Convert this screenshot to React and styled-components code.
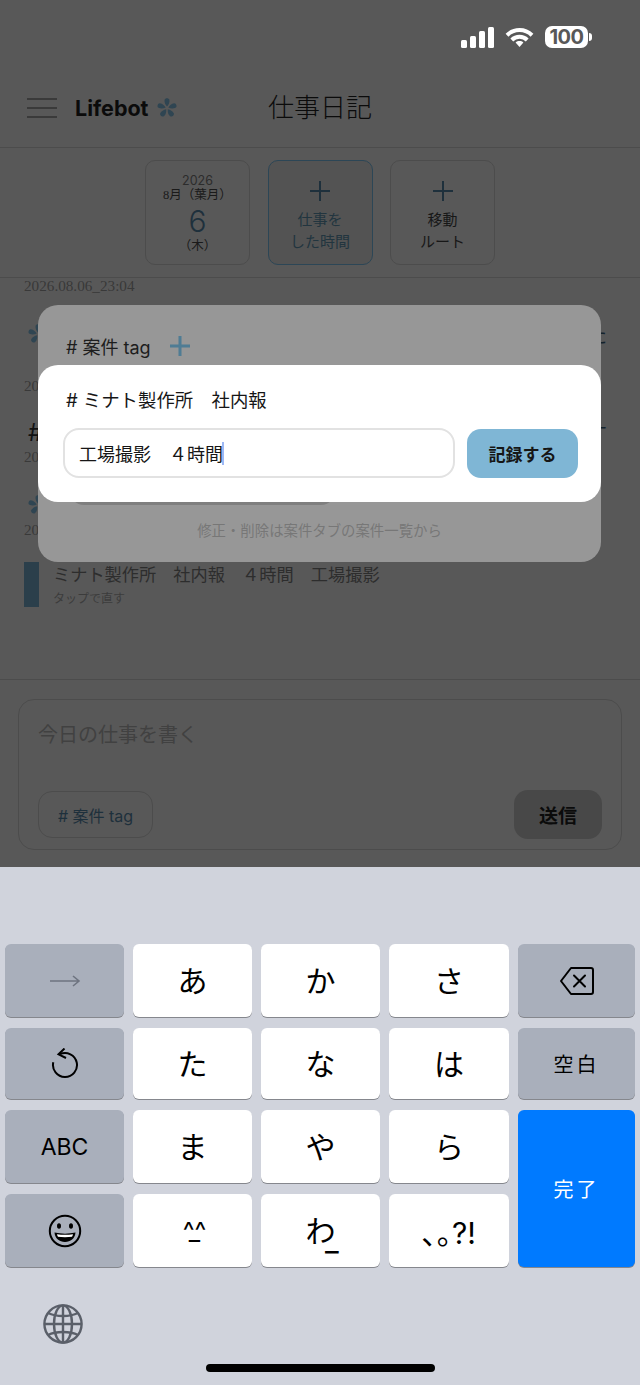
import React from 'react';
import styled, { createGlobalStyle } from 'styled-components';

const GlobalStyle = createGlobalStyle`
  html, body { margin: 0; padding: 0; background: #d0d3dc; }
  * { box-sizing: border-box; }
  body { font-family: "Inter", "Noto Sans CJK JP", sans-serif; }
`;

const SERIF = '"Liberation Serif", "Noto Sans CJK JP", serif';
const TEAL = '#1e303c';

const Screen = styled.div`
  width: 640px;
  height: 1385px;
  display: flex;
  flex-direction: column;
  overflow: hidden;
`;

const Page = styled.div`
  position: relative;
  height: 867px;
  flex: none;
  display: flex;
  flex-direction: column;
  background: #585858;
`;

const StatusBar = styled.div`
  height: 60px;
  flex: none;
  display: flex;
  justify-content: flex-end;
  align-items: flex-start;
  gap: 11px;
  padding: 26px 52px 0 0;
`;

const Battery = styled.div`
  position: relative;
  width: 43px;
  height: 22px;
  border-radius: 7px;
  background: #fff;
  color: #585858;
  font-size: 20px;
  font-weight: 700;
  line-height: 22px;
  text-align: center;
  letter-spacing: -0.5px;

  &::after {
    content: '';
    position: absolute;
    right: -4px;
    top: 7px;
    width: 3px;
    height: 8px;
    border-radius: 0 3px 3px 0;
    background: #fff;
  }
`;

const Header = styled.header`
  position: relative;
  height: 88px;
  flex: none;
  display: flex;
  align-items: center;
  padding: 8px 0 0 27px;
  border-bottom: 1px solid #4c4c4c;
`;

const MenuButton = styled.div`
  width: 30px;
  height: 20px;
  border-top: 2px solid #3a3a3a;
  border-bottom: 2px solid #3a3a3a;
  display: flex;
  align-items: center;

  &::before {
    content: '';
    width: 100%;
    height: 2px;
    background: #3a3a3a;
  }
`;

const Logo = styled.div`
  margin-left: 18px;
  display: flex;
  align-items: center;
  gap: 6px;
  font-size: 21.5px;
  font-weight: 700;
  color: #0b0b0b;
`;

const Title = styled.h1`
  position: absolute;
  left: 0;
  right: 0;
  top: 32px;
  margin: 0;
  text-align: center;
  font-family: ${SERIF};
  font-size: 26px;
  line-height: 34px;
  font-weight: 300;
  color: #0b0b0b;
`;

const TileRow = styled.div`
  height: 130px;
  flex: none;
  display: flex;
  justify-content: center;
  gap: 17.5px;
  padding-top: 12px;
  border-bottom: 1px solid #4c4c4c;
`;

const Tile = styled.div`
  width: 105px;
  height: 105px;
  display: flex;
  flex-direction: column;
  align-items: center;
  border-radius: 10px;
  border: 1px solid ${({ $active }) => ($active ? '#2c4656' : '#4c4c4c')};
  background: ${({ $active }) => ($active ? '#535353' : 'transparent')};
  color: ${({ $active }) => ($active ? '#22353f' : '#171717')};
  font-family: ${SERIF};
`;

const TileYear = styled.div`
  margin-top: 13px;
  font-size: 12.5px;
  line-height: 14px;
  color: #2c2c2c;
  font-family: "Inter", sans-serif;
`;

const TileMonth = styled.div`
  font-size: 12.5px;
  line-height: 15px;
  color: #1a1a1a;
`;

const TileDay = styled.div`
  font-family: "Inter", sans-serif;
  font-weight: 300;
  font-size: 30px;
  line-height: 35px;
  margin-top: 1px;
  color: ${TEAL};
`;

const TileWeek = styled.div`
  font-size: 12.5px;
  line-height: 15px;
  color: #1a1a1a;
`;

const TilePlus = styled.div`
  height: 22px;
  margin: 19px 0 8px;
  flex: none;
`;

const TileLabel = styled.div`
  font-size: 15px;
  line-height: 21.5px;
  text-align: center;
`;

const Feed = styled.div`
  height: 402px;
  flex: none;
  padding: 0 24px;
  border-bottom: 1px solid #4c4c4c;
`;

const Stamp = styled.div`
  font-family: ${SERIF};
  font-size: 15.2px;
  line-height: 16px;
  font-variant-numeric: oldstyle-nums;
  color: #393939;
`;

const Message = styled.div`
  height: ${({ $height }) => $height}px;
  display: flex;
  align-items: center;
  justify-content: space-between;
  padding: ${({ $pad }) => $pad || '0'};
  font-size: 20px;
  color: #14222b;
`;

const HashMark = styled.span`
  font-size: 24px;
  color: #111;
`;

const Record = styled.div`
  display: flex;
  gap: 14px;
  height: 45px;
  margin-top: 24px;
`;

const RecordBar = styled.div`
  width: 15px;
  flex: none;
  background: #2b3f4b;
`;

const RecordText = styled.div`
  font-size: 17.2px;
  line-height: 26px;
  color: #2d2d2d;
  white-space: pre;
`;

const RecordHint = styled.div`
  font-size: 12px;
  line-height: 22px;
  color: #3c3c3c;
`;

const ComposerArea = styled.div`
  flex: 1;
  padding: 19px 18px 0;
`;

const Composer = styled.div`
  height: 151px;
  width: 604px;
  display: flex;
  flex-direction: column;
  justify-content: space-between;
  padding: 21px 19px 10px 19px;
  border: 1px solid #4c4c4c;
  border-radius: 16px;
`;

const Placeholder = styled.div`
  font-size: 20px;
  line-height: 28px;
  color: #414141;
`;

const ComposerFoot = styled.div`
  display: flex;
  align-items: center;
  justify-content: space-between;
`;

const TagChip = styled.div`
  width: 115px;
  height: 47px;
  display: flex;
  align-items: center;
  justify-content: center;
  border: 1px solid #4c4c4c;
  border-radius: 14px;
  font-size: 16px;
  color: ${TEAL};
  white-space: pre;
`;

const SendButton = styled.div`
  width: 88px;
  height: 49px;
  display: flex;
  align-items: center;
  justify-content: center;
  border-radius: 14px;
  background: #484848;
  font-size: 19px;
  font-weight: 600;
  color: #0b0b0b;
`;

const Sheet = styled.div`
  position: absolute;
  left: 38px;
  top: 305px;
  width: 563px;
  height: 257px;
  display: flex;
  flex-direction: column;
  padding: 28px 0 0 28px;
  border-radius: 20px;
  background: #979797;
`;

const SheetHead = styled.div`
  height: 26px;
  display: flex;
  align-items: center;
  gap: 18px;
  font-size: 18px;
  color: #1d1d1d;
  white-space: pre;
`;

const SheetChip = styled.div`
  width: 265px;
  height: 50px;
  margin: 96px 0 0 4px;
  border-radius: 14px;
  background: #7f7f7f;
`;

const SheetHint = styled.div`
  margin: 16px 0 0 -28px;
  font-family: ${SERIF};
  font-size: 14.4px;
  line-height: 20px;
  text-align: center;
  color: #777;
`;

const Card = styled.div`
  position: absolute;
  left: 0;
  right: 0;
  top: 60px;
  height: 137px;
  padding: 22px 23px 0 25px;
  border-radius: 20px;
  background: #fff;
`;

const CardTitle = styled.div`
  height: 26px;
  margin: 0 0 15px 3px;
  font-size: 18.4px;
  line-height: 26px;
  color: #161616;
  white-space: pre;
`;

const CardForm = styled.div`
  display: flex;
  align-items: center;
  gap: 12px;
`;

const Field = styled.div`
  width: 392px;
  height: 50px;
  display: flex;
  align-items: center;
  padding-left: 14px;
  border: 2px solid #e2e2e2;
  border-radius: 16px;
  font-size: 18px;
  color: #161616;
  white-space: pre;
`;

const Caret = styled.span`
  width: 2px;
  height: 23px;
  margin-left: -1px;
  background: #9db8f5;
`;

const SaveButton = styled.div`
  width: 111px;
  height: 49px;
  display: flex;
  align-items: center;
  justify-content: center;
  border-radius: 14px;
  background: #7fb6d5;
  font-size: 17px;
  font-weight: 600;
  color: #161616;
`;

const Keyboard = styled.div`
  flex: 1;
  display: flex;
  flex-direction: column;
  background: #d0d3dc;
`;

const KeyGrid = styled.div`
  display: grid;
  grid-template-columns: 119px 119px 119px 120px 117px;
  grid-template-rows: 74px 72px 74px 74px;
  gap: 10px 9px;
  padding: 77px 0 0 5px;
`;

const KEY_BG = { char: '#fff', fn: '#a9afbb', done: '#007aff' };

const Key = styled.div`
  position: relative;
  display: flex;
  align-items: center;
  justify-content: center;
  margin-bottom: 1px;
  padding-bottom: ${({ $size, $kind }) => (!$size && !$kind ? 4 : 0)}px;
  border-radius: 6px;
  background: ${({ $kind }) => KEY_BG[$kind || 'char']};
  box-shadow: 0 1px 0 #85878d;
  color: ${({ $kind }) => ($kind === 'done' ? '#fff' : '#000')};
  font-size: ${({ $size }) => $size || 30}px;
  letter-spacing: ${({ $spacing }) => $spacing || 0}px;
  ${({ $kind }) => $kind === 'done' && 'grid-row: span 2;'}
`;

const WaUnderline = styled.span`
  position: absolute;
  left: 64px;
  top: 31px;
  font-size: 30px;
  line-height: 1;
`;

const KeyboardFoot = styled.div`
  flex: 1;
  display: flex;
  flex-direction: column;
  padding-top: 36px;
`;

const GlobeSlot = styled.div`
  height: 40px;
  padding-left: 43px;
`;

const HomeBar = styled.div`
  width: 229px;
  height: 8px;
  margin: 20px 0 0 206px;
  border-radius: 4px;
  background: #000;
`;

const Flower = ({ size = 24, color = '#2f4552' }) => (
  <svg width={size} height={size} viewBox="0 0 24 24">
    {[0, 72, 144, 216, 288].map((angle) => (
      <path
        key={angle}
        d="M12 10.6C10.2 8.6 9.2 6.4 9.6 3.8C10 1.6 14 1.6 14.4 3.8C14.8 6.4 13.8 8.6 12 10.6Z"
        fill={color}
        transform={`rotate(${angle} 12 12)`}
      />
    ))}
  </svg>
);

const SignalIcon = () => (
  <svg width="33" height="22" viewBox="0 0 33 22" fill="#fff">
    <rect x="0" y="14" width="6" height="8" rx="1.5" />
    <rect x="9" y="10" width="6" height="12" rx="1.5" />
    <rect x="18" y="5" width="6" height="17" rx="1.5" />
    <rect x="27" y="1" width="6" height="21" rx="1.5" />
  </svg>
);

const WifiIcon = () => (
  <svg width="29" height="22" viewBox="0 0 29 22" fill="none" stroke="#fff" strokeWidth="4">
    <path d="M2 9.2C9 2.4 20 2.4 27 9.2" />
    <path d="M6.8 14C11 9.8 18 9.8 22.2 14" />
    <path d="M10.6 16.4C12.8 14.6 16.2 14.6 18.4 16.4L14.5 21Z" fill="#fff" stroke="none" />
  </svg>
);

const PlusIcon = ({ color, weight = 2 }) => (
  <svg width="22" height="22" viewBox="0 0 22 22" stroke={color} strokeWidth={weight}>
    <path d="M11 1V21M1 11H21" />
  </svg>
);

const ArrowIcon = () => (
  <svg width="32" height="12" viewBox="0 0 32 12" fill="none" stroke="#6e7480" strokeWidth="1.6">
    <path d="M1 6H30M24 1L30 6L24 11" />
  </svg>
);

const UndoIcon = () => (
  <svg width="28" height="31" viewBox="0 0 28 31" fill="none" stroke="#000" strokeWidth="2">
    <path d="M9 6.1A12 12 0 1 1 2.3 14.3" />
    <path d="M13.5 0.5L7.5 6.3L15 10" />
  </svg>
);

const EmojiIcon = () => (
  <svg width="34" height="34" viewBox="0 0 34 34">
    <circle cx="17" cy="17" r="15.2" fill="none" stroke="#000" strokeWidth="2" />
    <ellipse cx="11" cy="12" rx="2" ry="2.8" />
    <ellipse cx="23" cy="12" rx="2" ry="2.8" />
    <path d="M6.5 18.5C13 20 21 20 27.5 18.5C27 24.5 22.5 28 17 28C11.5 28 7 24.5 6.5 18.5Z" />
    <path d="M9 20.2C14 21 20 21 25 20.2C24.8 21.4 24.4 22.2 24 22.8C20 23.4 14 23.4 10 22.8C9.6 22.2 9.2 21.4 9 20.2Z" fill="#fff" />
  </svg>
);

const BackspaceIcon = () => (
  <svg width="36" height="30" viewBox="0 0 36 30" fill="none" stroke="#000" strokeWidth="2" strokeLinejoin="round">
    <path d="M12 2H32C33.4 2 34 2.8 34 4V26C34 27.2 33.4 28 32 28H12L2 15Z" />
    <path d="M15 9.5L26 20.5M26 9.5L15 20.5" strokeLinecap="round" />
  </svg>
);

const GlobeIcon = () => (
  <svg width="40" height="40" viewBox="0 0 40 40" fill="none" stroke="#5a5f69" strokeWidth="2.4">
    <circle cx="20" cy="20" r="18.6" />
    <ellipse cx="20" cy="20" rx="9" ry="18.6" />
    <path d="M20 1.4V38.6M1.4 20H38.6" />
    <path d="M5 9C13 13 27 13 35 9M5 31C13 27 27 27 35 31" />
  </svg>
);

const App = () => (
  <Screen>
    <GlobalStyle />
    <Page>
      <StatusBar>
        <SignalIcon />
        <WifiIcon />
        <Battery>100</Battery>
      </StatusBar>

      <Header>
        <MenuButton />
        <Logo>
          Lifebot
          <Flower />
        </Logo>
        <Title>仕事日記</Title>
      </Header>

      <TileRow>
        <Tile>
          <TileYear>2026</TileYear>
          <TileMonth>8月（葉月）</TileMonth>
          <TileDay>6</TileDay>
          <TileWeek>（木）</TileWeek>
        </Tile>
        <Tile $active>
          <TilePlus><PlusIcon color={TEAL} /></TilePlus>
          <TileLabel>仕事を<br />した時間</TileLabel>
        </Tile>
        <Tile>
          <TilePlus><PlusIcon color={TEAL} /></TilePlus>
          <TileLabel>移動<br />ルート</TileLabel>
        </Tile>
      </TileRow>

      <Feed>
        <Stamp>2026.08.06_23:04</Stamp>
        <Message $height={84} $pad="0 9px 4px 2px">
          <Flower />
          <span>今日もお疲れさまでした</span>
        </Message>
        <Stamp>2026.08.06_23:04</Stamp>
        <Message $height={55} $pad="22px 9px 0 4px">
          <HashMark>#</HashMark>
          <span>今日の案件を記録します</span>
        </Message>
        <Stamp>2026.08.06_23:04</Stamp>
        <Message $height={57} $pad="22px 0 0 2px">
          <Flower />
        </Message>
        <Stamp>2026.08.06_23:04</Stamp>
        <Record>
          <RecordBar />
          <div>
            <RecordText>ミナト製作所　社内報　４時間　工場撮影</RecordText>
            <RecordHint>タップで直す</RecordHint>
          </div>
        </Record>
      </Feed>

      <ComposerArea>
        <Composer>
          <Placeholder>今日の仕事を書く</Placeholder>
          <ComposerFoot>
            <TagChip># 案件 tag</TagChip>
            <SendButton>送信</SendButton>
          </ComposerFoot>
        </Composer>
      </ComposerArea>

      <Sheet>
        <SheetHead>
          # 案件 tag
          <PlusIcon color="#4f7c94" weight={3} />
        </SheetHead>
        <SheetChip />
        <SheetHint>修正・削除は案件タブの案件一覧から</SheetHint>
        <Card>
          <CardTitle># ミナト製作所　社内報</CardTitle>
          <CardForm>
            <Field>工場撮影　４時間<Caret /></Field>
            <SaveButton>記録する</SaveButton>
          </CardForm>
        </Card>
      </Sheet>
    </Page>

    <Keyboard>
      <KeyGrid>
        <Key $kind="fn"><ArrowIcon /></Key>
        <Key>あ</Key>
        <Key>か</Key>
        <Key>さ</Key>
        <Key $kind="fn"><BackspaceIcon /></Key>

        <Key $kind="fn"><UndoIcon /></Key>
        <Key>た</Key>
        <Key>な</Key>
        <Key>は</Key>
        <Key $kind="fn" $size={20} $spacing={3}>空白</Key>

        <Key $kind="fn" $size={23}>ABC</Key>
        <Key>ま</Key>
        <Key>や</Key>
        <Key>ら</Key>
        <Key $kind="done" $size={20} $spacing={3}>完了</Key>

        <Key $kind="fn"><EmojiIcon /></Key>
        <Key $size={25} $spacing={-4}>^_^</Key>
        <Key>わ<WaUnderline>_</WaUnderline></Key>
        <Key $size={30}>､｡?!</Key>
      </KeyGrid>
      <KeyboardFoot>
        <GlobeSlot><GlobeIcon /></GlobeSlot>
        <HomeBar />
      </KeyboardFoot>
    </Keyboard>
  </Screen>
);

export default App;
